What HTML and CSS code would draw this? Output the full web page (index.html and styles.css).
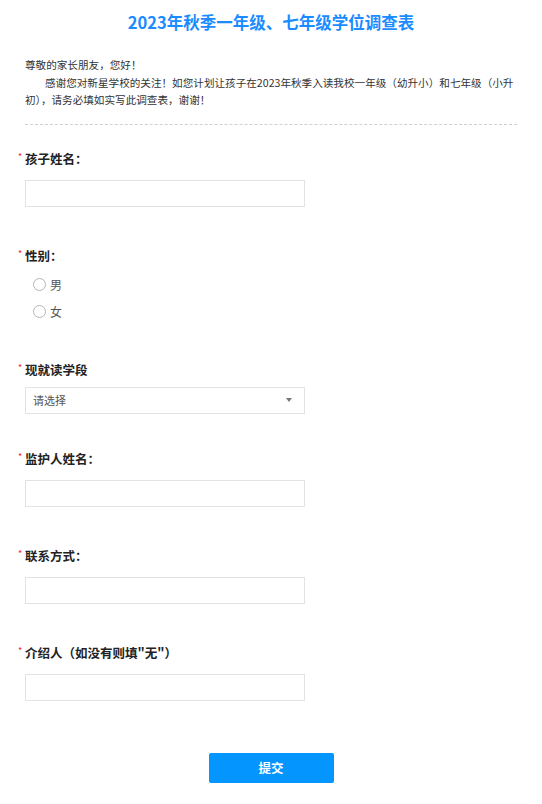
FILE: index.html
```html
<!DOCTYPE html>
<html lang="zh-CN">
<head>
  <meta charset="UTF-8" />
  <meta name="viewport" content="width=device-width, initial-scale=1.0"/>
  <title>2023年秋季一年级、七年级学位调查表</title>
  <link rel="stylesheet" href="styles.css">
</head>
<body>

  <div class="survey">
    <h1 class="title">2023年秋季一年级、七年级学位调查表</h1>

    <div class="intro">
      <p>尊敬的家长朋友，您好！</p>
      <p class="indent">感谢您对新星学校的关注！如您计划让孩子在2023年秋季入读我校一年级（幼升小）和七年级（小升<br>初），请务必填如实写此调查表，谢谢！</p>
    </div>

    <form class="form">
      <div class="field">
        <label class="field-label"><span class="req">*</span>孩子姓名：</label>
        <input class="text-input" type="text" name="child_name">
      </div>

      <div class="field field-radio">
        <label class="field-label"><span class="req">*</span>性别：</label>
        <div class="radio-list">
          <label class="radio"><span class="radio-dot"></span>男</label>
          <label class="radio"><span class="radio-dot"></span>女</label>
        </div>
      </div>

      <div class="field field-select">
        <label class="field-label"><span class="req">*</span>现就读学段</label>
        <div class="select-box">
          <span>请选择</span>
          <span class="arrow"></span>
        </div>
      </div>

      <div class="field">
        <label class="field-label"><span class="req">*</span>监护人姓名：</label>
        <input class="text-input" type="text" name="guardian">
      </div>

      <div class="field">
        <label class="field-label"><span class="req">*</span>联系方式：</label>
        <input class="text-input" type="text" name="phone">
      </div>

      <div class="field">
        <label class="field-label"><span class="req">*</span>介绍人（如没有则填"无"）</label>
        <input class="text-input" type="text" name="referrer">
      </div>

      <div class="actions">
        <button type="button" class="submit">提交</button>
      </div>
    </form>
  </div>

</body>
</html>
```
FILE: styles.css
```css
body {
  margin: 0;
  font-family: "Noto Sans CJK SC", "Microsoft YaHei", sans-serif;
  color: #333;
  background: #fff;
}

.survey {
  width: 492px;
  margin: 0 auto;
  padding-top: 10px;
}

.title {
  margin: 0;
  font-size: 16.5px;
  line-height: 24px;
  font-weight: bold;
  text-align: center;
  color: #1a8cff;
}

.intro {
  margin-top: 22px;
  font-size: 10.6px;
  line-height: 17.6px;
  color: #333;
  padding-bottom: 15px;
  border-bottom: 1px dashed #d0d0d0;
}

.intro p {
  margin: 0;
}

.intro .indent {
  text-indent: 20px;
}

.form {
  padding-top: 24px;
}

.field {
  padding-bottom: 39px;
}

.field-label {
  display: block;
  font-size: 12.5px;
  line-height: 20px;
  font-weight: bold;
  color: #222;
  margin-bottom: 11px;
}

.req {
  display: inline-block;
  width: 7px;
  margin-left: -7px;
  color: #f5222d;
  font-size: 9px;
  font-weight: normal;
  vertical-align: top;
  line-height: 16px;
}

.text-input {
  display: block;
  box-sizing: border-box;
  width: 280px;
  height: 27px;
  margin: 0;
  border: 1px solid #e3e3e3;
  background: #fff;
  outline: none;
}

/* radio group */
.field-radio {
  padding-bottom: 37px;
}

.field-radio .field-label {
  margin-bottom: 8px;
}

.radio-list {
  display: flex;
  flex-direction: column;
  gap: 5px;
  padding-left: 8px;
}

.radio {
  display: flex;
  align-items: center;
  gap: 4px;
  height: 22px;
  font-size: 12px;
  color: #555;
}

.radio-dot {
  width: 11px;
  height: 11px;
  border: 1px solid #b5b5b5;
  border-radius: 50%;
}

/* select */
.field-select {
  padding-bottom: 35px;
}

.field-select .field-label {
  margin-bottom: 7px;
}

.select-box {
  box-sizing: border-box;
  width: 280px;
  height: 27px;
  border: 1px solid #e3e3e3;
  display: flex;
  align-items: center;
  justify-content: space-between;
  padding: 0 12px 0 7px;
  font-size: 11px;
  color: #555;
}

.arrow {
  width: 0;
  height: 0;
  border-left: 3px solid transparent;
  border-right: 3px solid transparent;
  border-top: 4px solid #777;
}

.actions {
  display: flex;
  justify-content: center;
  padding-top: 13px;
}

.submit {
  width: 125px;
  height: 30px;
  border: none;
  border-radius: 2px;
  background: #0595ff;
  color: #fff;
  font-family: inherit;
  font-size: 12.5px;
  font-weight: bold;
  cursor: pointer;
}
```
